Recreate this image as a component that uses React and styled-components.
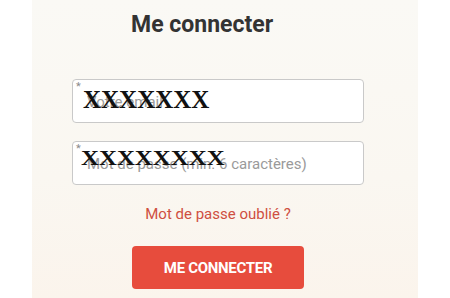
import React from "react";
import styled, { createGlobalStyle } from "styled-components";

const GlobalStyle = createGlobalStyle`
  body {
    margin: 0;
    background: #ffffff;
    font-family: Roboto, "Liberation Sans", sans-serif;
  }
`;

const Page = styled.div`
  display: flex;
  justify-content: center;
  height: 298px;
  overflow: hidden;
`;

const Panel = styled.div`
  width: 386px;
  height: 298px;
  padding-top: 11px;
  box-sizing: border-box;
  background: linear-gradient(180deg, #faf9f5 0%, #faf7f1 60%, #fbf4ec 100%);
`;

const Title = styled.h1`
  margin: 0 0 0 99px;
  font-size: 23px;
  line-height: 28px;
  font-weight: 700;
  color: #333333;
`;

const Form = styled.form`
  display: flex;
  flex-direction: column;
  align-items: center;
  width: 292px;
  margin: 40px 0 0 40px;
`;

const Field = styled.label`
  position: relative;
  display: block;
  width: 100%;
  height: 44px;
  margin-bottom: ${(p) => p.$gap}px;
`;

const Input = styled.input`
  width: 100%;
  height: 100%;
  box-sizing: border-box;
  padding: 2px 14px 0;
  border: 1px solid #c9c9c9;
  border-radius: 4px;
  background: #ffffff;
  font-family: Roboto, "Liberation Sans", sans-serif;
  font-size: 15px;
  color: #333;
  outline: none;
  &::placeholder {
    color: #9a9a9a;
  }
`;

const Star = styled.span`
  position: absolute;
  top: 2px;
  left: 4px;
  font-size: 11px;
  line-height: 11px;
  color: #8a8a8a;
  pointer-events: none;
`;

const Mask = styled.span`
  position: absolute;
  top: ${(p) => p.$top}px;
  left: ${(p) => p.$left}px;
  font-family: "Liberation Serif", serif;
  font-weight: 700;
  font-size: ${(p) => p.$size}px;
  line-height: ${(p) => p.$size}px;
  letter-spacing: ${(p) => p.$spacing}px;
  color: #111111;
  transform: scaleX(${(p) => p.$stretch});
  transform-origin: left center;
  pointer-events: none;
`;

const Forgot = styled.a`
  display: block;
  margin-bottom: 23px;
  font-size: 15px;
  line-height: 18px;
  color: #cf4f41;
  text-decoration: none;
`;

const Button = styled.button`
  width: 172px;
  height: 43px;
  border: none;
  border-radius: 4px;
  background: #e74c3d;
  color: #ffffff;
  font-family: Roboto, "Liberation Sans", sans-serif;
  font-size: 15px;
  font-weight: 700;
  letter-spacing: -0.3px;
`;

const App = () => (
  <>
    <GlobalStyle />
    <Page>
      <Panel>
        <Title>Me connecter</Title>
        <Form onSubmit={(e) => e.preventDefault()}>
          <Field $gap={18}>
            <Input type="email" placeholder="Votre email" />
            <Star>*</Star>
            <Mask $top={8} $left={11} $size={25} $spacing={0} $stretch={1}>
              XXXXXXX
            </Mask>
          </Field>
          <Field $gap={20}>
            <Input type="password" placeholder="Mot de passe (min. 6 caractères)" />
            <Star>*</Star>
            <Mask $top={6} $left={9} $size={22} $spacing={0} $stretch={1.13}>
              XXXXXXXX
            </Mask>
          </Field>
          <Forgot href="#">Mot de passe oublié ?</Forgot>
          <Button type="submit">ME CONNECTER</Button>
        </Form>
      </Panel>
    </Page>
  </>
);

export default App;
